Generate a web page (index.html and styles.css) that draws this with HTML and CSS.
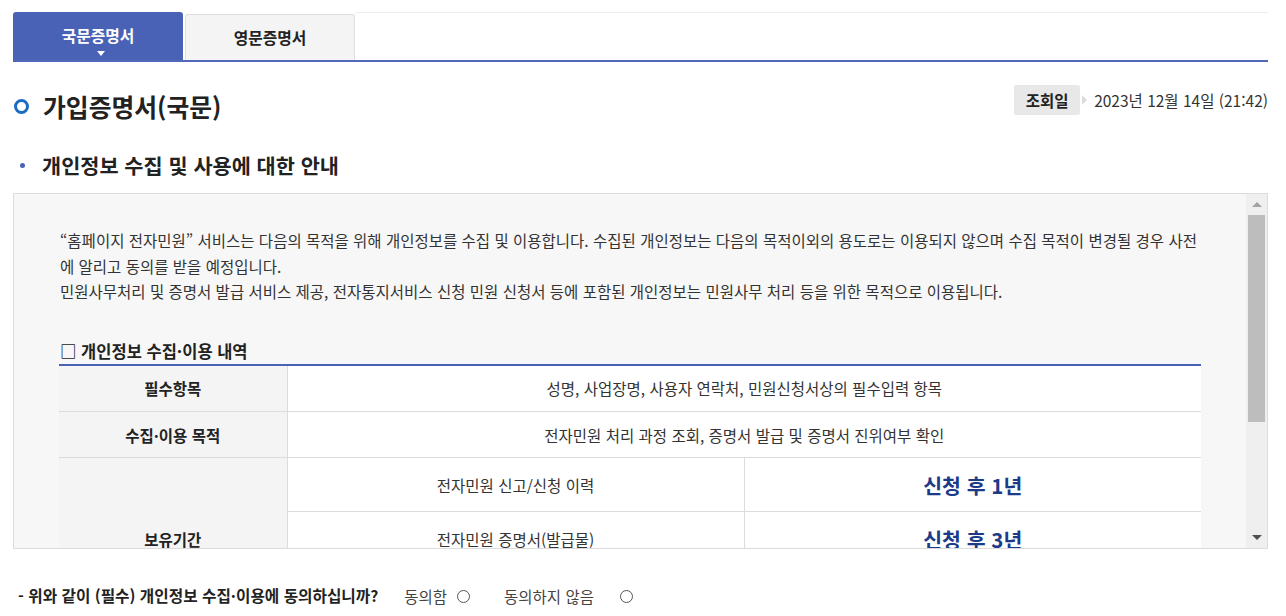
FILE: index.html
```html
<!DOCTYPE html>
<html lang="ko">
<head>
<meta charset="utf-8">
<title>가입증명서(국문)</title>
<link rel="stylesheet" href="styles.css">
</head>
<body>
<div class="page">
  <div class="tabs">
    <a class="tab tab-active">국문증명서<span class="caret"></span></a>
    <a class="tab tab-normal">영문증명서</a>
    <div class="tabs-fill"></div>
  </div>

  <div class="title-row">
    <h2 class="title"><span class="ring"></span>가입증명서(국문)</h2>
    <div class="date">
      <span class="date-label">조회일</span>
      <span class="date-arrow"></span>
      <span class="date-value">2023년 12월 14일 (21:42)</span>
    </div>
  </div>

  <h3 class="sub"><span class="dot"></span>개인정보 수집 및 사용에 대한 안내</h3>

  <div class="scrollbox">
    <div class="scroll-content">
      <p class="intro">“홈페이지 전자민원” 서비스는 다음의 목적을 위해 개인정보를 수집 및 이용합니다. 수집된 개인정보는 다음의 목적이외의 용도로는 이용되지 않으며 수집 목적이 변경될 경우 사전에 알리고 동의를 받을 예정입니다.<br>민원사무처리 및 증명서 발급 서비스 제공, 전자통지서비스 신청 민원 신청서 등에 포함된 개인정보는 민원사무 처리 등을 위한 목적으로 이용됩니다.</p>
      <h4 class="tbl-title">□ 개인정보 수집·이용 내역</h4>
      <table class="info">
        <colgroup><col class="c1"><col class="c2"><col class="c3"></colgroup>
        <tr class="r0"><th>필수항목</th><td colspan="2">성명, 사업장명, 사용자 연락처, 민원신청서상의 필수입력 항목</td></tr>
        <tr class="r1"><th>수집·이용 목적</th><td colspan="2">전자민원 처리 과정 조회, 증명서 발급 및 증명서 진위여부 확인</td></tr>
        <tr class="r2"><th rowspan="3">보유기간</th><td>전자민원 신고/신청 이력</td><td class="period">신청 후 1년</td></tr>
        <tr class="r2"><td>전자민원 증명서(발급물)</td><td class="period">신청 후 3년</td></tr>
        <tr class="r2"><td></td><td class="period"></td></tr>
      </table>
    </div>
    <div class="scrollbar">
      <span class="sb-btn"><span class="sb-up"></span></span>
      <span class="sb-thumb"></span>
      <span class="sb-track"></span>
      <span class="sb-btn"><span class="sb-down"></span></span>
    </div>
  </div>

  <div class="agree">
    <span class="agree-q">- 위와 같이 (필수) 개인정보 수집·이용에 동의하십니까?</span>
    <label class="opt opt-yes">동의함 <span class="radio"></span></label>
    <label class="opt opt-no">동의하지 않음 <span class="radio radio-far"></span></label>
  </div>
</div>
</body>
</html>
```

FILE: styles.css
```css
* { box-sizing: border-box; }
html, body { margin: 0; padding: 0; background: #fff; }
body {
  font-family: "Noto Sans CJK KR", "Noto Sans", sans-serif;
  color: #333;
  font-size: 15.5px;
}
.page {
  width: 1286px;
  padding: 12px 18px 0 13px;
}

/* tabs */
.tabs {
  display: flex;
  align-items: flex-end;
  height: 50px;
  border-bottom: 2px solid #5468b8;
}
.tab {
  display: flex;
  align-items: center;
  justify-content: center;
  width: 170px;
  font-size: 15.8px;
  font-weight: 700;
  position: relative;
  text-decoration: none;
}
.tab-active {
  height: 48px;
  background: #4a62b6;
  color: #fff;
  border-radius: 3px 3px 0 0;
  padding-bottom: 2px;
}
.caret {
  position: absolute;
  left: 84px;
  top: 39px;
  width: 0; height: 0;
  border-left: 4px solid transparent;
  border-right: 4px solid transparent;
  border-top: 5px solid #fff;
}
.tab-normal {
  height: 46px;
  margin-left: 2px;
  background: #f4f4f4;
  color: #222;
  border: 1px solid #dedede;
  border-bottom: none;
  border-radius: 3px 3px 0 0;
  padding-bottom: 1px;
}
.tabs-fill {
  flex: 1;
  align-self: stretch;
  border-top: 1px solid #efefef;
}

/* title */
.title-row {
  display: flex;
  justify-content: space-between;
  align-items: flex-start;
  margin-top: 23px;
}
.title {
  display: flex;
  align-items: center;
  margin: 3px 0 0 0;
  font-size: 24.8px;
  line-height: 36px;
  font-weight: 700;
  color: #222;
}
.ring {
  width: 15px; height: 15px;
  border: 3px solid #1a6cc4;
  border-radius: 50%;
  margin: 0 14px 0 1px;
}
.date {
  display: flex;
  align-items: center;
  height: 30px;
}
.date-label {
  display: flex;
  align-items: center;
  justify-content: center;
  width: 66px;
  height: 30px;
  background: #e8e8e8;
  border-radius: 2px;
  font-weight: 700;
  color: #222;
}
.date-arrow {
  width: 0; height: 0;
  border-top: 5px solid transparent;
  border-bottom: 5px solid transparent;
  border-left: 5px solid #dcdcdc;
  margin: 0 7px 0 2px;
}
.date-value { color: #333; font-size: 15.5px; }

/* sub heading */
.sub {
  display: flex;
  align-items: center;
  margin: 26px 0 0 0;
  font-size: 20.8px;
  line-height: 30px;
  font-weight: 700;
  color: #222;
}
.dot {
  width: 5px; height: 5px;
  border-radius: 50%;
  background: #4a62b6;
  margin: 0 17px 0 7px;
}

/* scroll box */
.scrollbox {
  display: flex;
  margin-top: 13px;
  height: 356px;
  border: 1px solid #dcdcdc;
  background: #f7f7f7;
}
.scroll-content {
  flex: 1;
  overflow: hidden;
  padding: 34px 45px 0 46px;
}
.intro {
  margin: 0;
  line-height: 25.5px;
  color: #333;
  font-size: 15.5px;
}
.tbl-title {
  margin: 34px 0 0 0;
  font-size: 16.5px;
  line-height: 25px;
  font-weight: 700;
  color: #222;
}
.info {
  width: 1142px;
  margin-left: -1px;
  border-collapse: collapse;
  border-top: 2px solid #4a62b6;
  table-layout: fixed;
  font-size: 15.5px;
}
.c1 { width: 228px; }
.c2 { width: 457px; }
.c3 { width: 457px; }
.info th, .info td {
  border-bottom: 1px solid #dcdcdc;
  text-align: center;
  padding: 0;
}
.info th {
  background: #f4f4f4;
  font-weight: 700;
  color: #222;
  border-right: 1px solid #dcdcdc;
}
.info td { background: #fff; color: #333; }
.info td + td { border-left: 1px solid #dcdcdc; }
.r0 { height: 47px; }
.r1 { height: 46px; }
.r2 { height: 54px; }
.period {
  font-size: 20.5px;
  font-weight: 700;
  color: #1b3a87 !important;
}

/* fake scrollbar */
.scrollbar {
  width: 21px;
  display: flex;
  flex-direction: column;
  background: #efefef;
  padding: 0 2px;
}
.sb-btn {
  height: 21px;
  display: flex;
  align-items: center;
  justify-content: center;
}
.sb-up {
  width: 0; height: 0;
  border-left: 5px solid transparent;
  border-right: 5px solid transparent;
  border-bottom: 5px solid #a3a3a3;
}
.sb-down {
  width: 0; height: 0;
  border-left: 5px solid transparent;
  border-right: 5px solid transparent;
  border-top: 5px solid #505050;
}
.sb-thumb {
  height: 207px;
  background: #bdbdbd;
}
.sb-track { flex: 1; }

/* agree row */
.agree {
  display: flex;
  align-items: center;
  margin-top: 34px;
  padding-left: 5px;
  line-height: 26px;
}
.agree-q {
  font-weight: 700;
  color: #222;
  font-size: 15.7px;
}
.opt {
  display: flex;
  align-items: center;
  color: #444;
  font-size: 15.5px;
}
.opt-yes { margin-left: 26px; }
.opt-no { margin-left: 34px; }
.radio {
  width: 13px; height: 13px;
  border: 1px solid #555;
  border-radius: 50%;
  margin-left: 10px;
}
.radio-far { margin-left: 26px; }
```
